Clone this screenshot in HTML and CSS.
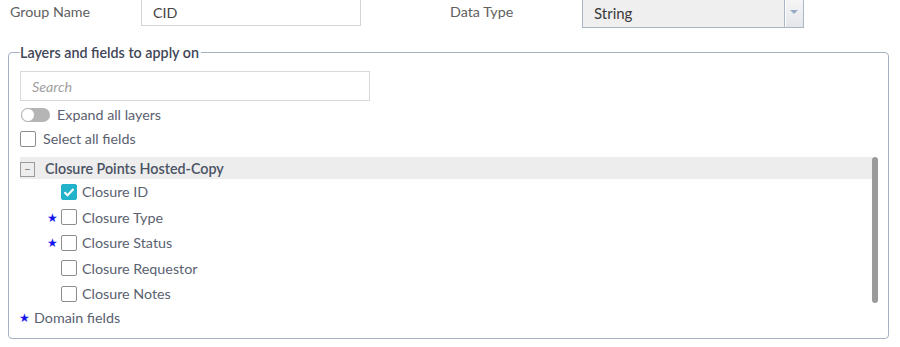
FILE: index.html
```html
<!DOCTYPE html>
<html lang="en">
<head>
  <meta charset="UTF-8">
  <title>Field Group</title>
  <link rel="stylesheet" href="styles.css">
</head>
<body>
  <div class="top-row">
    <label class="label group-label">Group Name</label>
    <input type="text" class="text-input group-input" value="CID">
    <label class="label type-label">Data Type</label>
    <div class="select">
      <span class="select-value">String</span>
      <span class="select-arrow"><span class="tri"></span></span>
    </div>
  </div>

  <fieldset class="layers">
    <legend>Layers and fields to apply on</legend>
    <input type="text" class="search" placeholder="Search">
    <div class="opt-row toggle-row">
      <span class="toggle"><span class="knob"></span></span>
      <span>Expand all layers</span>
    </div>
    <div class="opt-row select-all">
      <span class="box"></span>
      <span>Select all fields</span>
    </div>

    <div class="tree">
      <div class="tree-list">
        <div class="layer-head">
          <span class="collapse">&minus;</span>
          <span class="layer-name">Closure Points Hosted-Copy</span>
        </div>
        <div class="field"><span class="star"></span><span class="box checked"><svg viewBox="0 0 16 16" width="16" height="16"><path d="M3.5 8.2l3 3 6-6.2" fill="none" stroke="#fff" stroke-width="2"/></svg></span><span>Closure ID</span></div>
        <div class="field"><span class="star">&#9733;</span><span class="box"></span><span>Closure Type</span></div>
        <div class="field"><span class="star">&#9733;</span><span class="box"></span><span>Closure Status</span></div>
        <div class="field"><span class="star"></span><span class="box"></span><span>Closure Requestor</span></div>
        <div class="field"><span class="star"></span><span class="box"></span><span>Closure Notes</span></div>
      </div>
      <div class="scrollbar"></div>
    </div>

    <div class="legend-note"><span class="star">&#9733;</span>Domain fields</div>
  </fieldset>
</body>
</html>
```

FILE: styles.css
```css
body {
  margin: 0;
  font-family: Lato, "Open Sans", sans-serif;
  font-size: 14.3px;
  color: #5a6170;
  background: #fff;
  width: 900px;
  height: 347px;
  overflow: hidden;
}
.top-row {
  display: flex;
  align-items: flex-start;
  margin-top: -2px;
  height: 30px;
}
.label {
  color: #606060;
  line-height: 28px;
}
.group-label {
  margin-left: 10px;
  width: 131px;
}
.type-label {
  margin-left: 89px;
  width: 132px;
}
.text-input {
  box-sizing: border-box;
  width: 220px;
  height: 28px;
  border: 1px solid #d4d4d4;
  padding: 0 0 0 11px;
  font-family: inherit;
  font-size: 14.3px;
  color: #444;
  outline: none;
}
.select {
  box-sizing: border-box;
  width: 222px;
  height: 31px;
  margin-top: -1px;
  display: flex;
  border: 1px solid #aab6c7;
  background: #efefef;
}
.select-value {
  flex: 1;
  padding-left: 11px;
  line-height: 30px;
  font-size: 15px;
  color: #3a3a3a;
}
.select-arrow {
  width: 19px;
  border-left: 1px solid #aab6c7;
  box-shadow: inset 1px 1px 0 #fff;
  background: linear-gradient(#f6f6f6, #e4e6ea);
  display: flex;
  justify-content: center;
  padding-top: 12px;
  box-sizing: border-box;
}
.tri {
  width: 0;
  height: 0;
  border-left: 4px solid transparent;
  border-right: 4px solid transparent;
  border-top: 4px solid #97abc6;
}
.layers {
  margin: 16px 0 0 8px;
  width: 881px;
  height: 295px;
  box-sizing: border-box;
  border: 1px solid #a6b2c3;
  border-radius: 4px;
  padding: 0 10px 0 11px;
}
.layers legend {
  padding: 0 2px 0 0;
  margin-left: 0;
  color: #3f4757;
  font-weight: 600;
  font-size: 14.3px;
}
.search {
  box-sizing: border-box;
  width: 350px;
  height: 30px;
  margin: 10px 0 0 0;
  border: 1px solid #d9d9d9;
  padding-left: 11px;
  font-family: inherit;
  font-size: 14.3px;
  outline: none;
  display: block;
}
.search::placeholder {
  color: #a0a0a0;
  font-style: italic;
}
.opt-row {
  display: flex;
  align-items: center;
  height: 23px;
}
.toggle-row {
  margin-top: 2px;
}
.select-all {
  margin-top: 1px;
}
.toggle {
  width: 29px;
  height: 14px;
  border-radius: 7px;
  background: #b5b5b5;
  margin: 0 7px 0 1px;
  display: flex;
  align-items: center;
}
.knob {
  width: 14px;
  height: 14px;
  box-sizing: border-box;
  border-radius: 50%;
  background: #fff;
  border: 1px solid #b5b5b5;
}
.box {
  box-sizing: border-box;
  width: 16px;
  height: 16px;
  border: 1px solid #8d8d8d;
  border-radius: 2px;
  background: #fff;
  flex: none;
  display: flex;
}
.box.checked {
  background: #22b3cb;
  border-color: #22b3cb;
}
.box.checked svg {
  margin: -1px;
}
.select-all .box {
  margin-right: 7px;
}
.tree {
  display: flex;
  margin-top: 7px;
  height: 148px;
}
.tree-list {
  flex: 1;
}
.layer-head {
  background: #ededed;
  height: 22px;
  display: flex;
  align-items: center;
}
.collapse {
  box-sizing: border-box;
  width: 15px;
  height: 15px;
  border: 1px solid #9a9a9a;
  margin-top: 3px;
  font-size: 11px;
  line-height: 12px;
  text-align: center;
  color: #777;
  margin-right: 10px;
}
.layer-name {
  font-weight: 600;
  color: #4a5263;
}
.field {
  display: flex;
  align-items: center;
  height: 25.5px;
}
.field .star {
  width: 14px;
  margin-left: 27px;
}
.field .box {
  margin-right: 5px;
}
.star {
  color: #1515f0;
  font-size: 12px;
}
.scrollbar {
  width: 6px;
  height: 146px;
  background: #9b9b9b;
  border-radius: 3px;
}
.legend-note {
  height: 25px;
  display: flex;
  align-items: center;
  gap: 4px;
  margin-top: 0;
}
.legend-note .star {
  margin-left: -1px;
}
```
